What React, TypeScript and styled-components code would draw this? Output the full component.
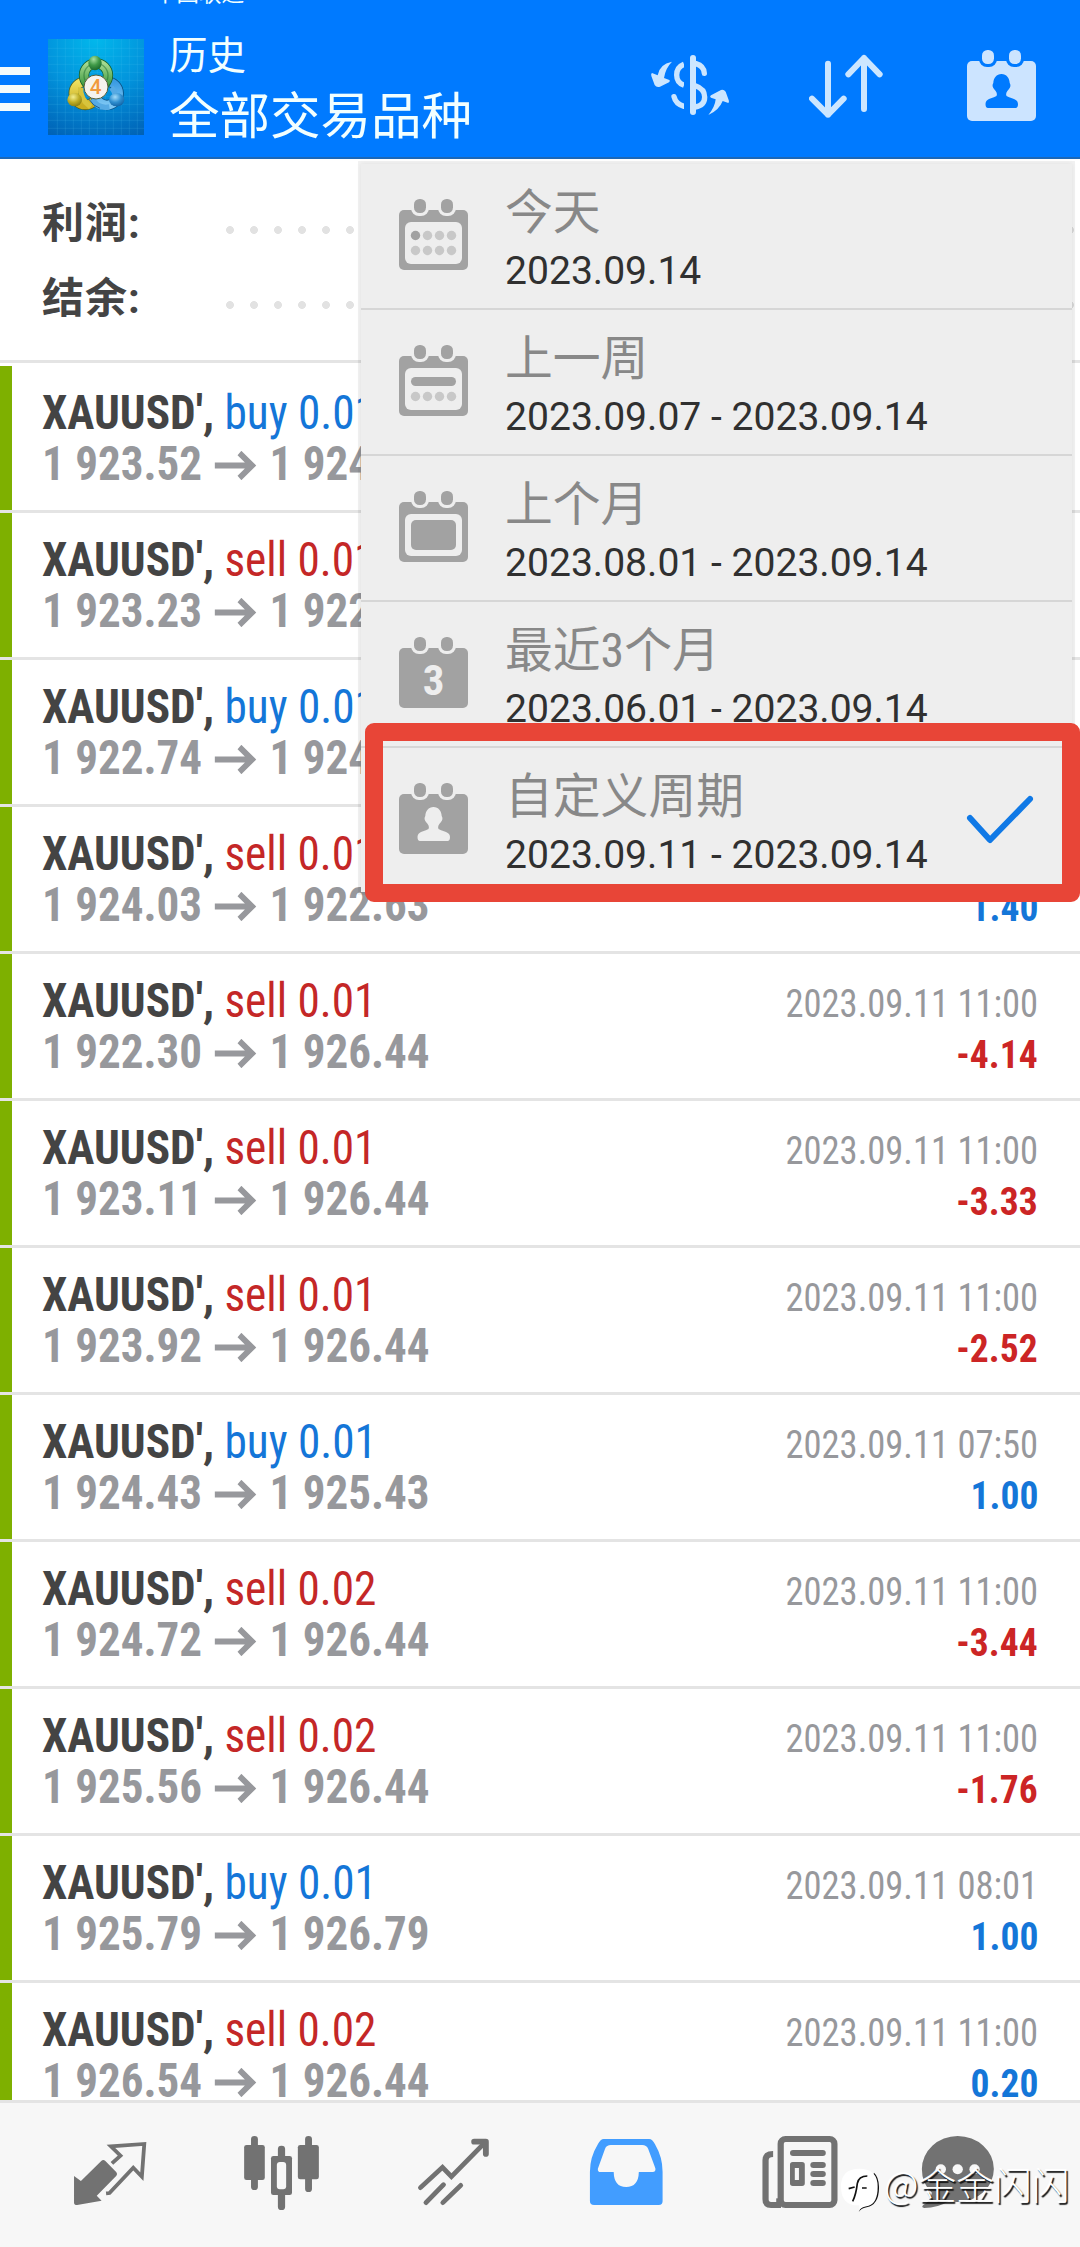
import React from 'react';
import styled, { createGlobalStyle } from 'styled-components';

const SANS = 'Roboto, "Noto Sans CJK SC", sans-serif';
const CONDENSED = '"Roboto Condensed", Roboto, "Noto Sans CJK SC", sans-serif';
const BLUE = '#007aff';

const Global = createGlobalStyle`
  body { margin: 0; background: #fff; font-family: ${SANS}; }
  div, span, section, header, nav { box-sizing: border-box; }
  svg { display: block; flex: none; }
`;

const Screen = styled.div`
  position: relative;
  display: flex;
  flex-direction: column;
  width: 1080px;
  height: 2247px;
  overflow: hidden;
  background: #fff;
`;

/* ---------- header ---------- */
const Header = styled.header`
  position: relative;
  display: flex;
  flex: none;
  height: 159px;
  padding-right: 44px;
  overflow: hidden;
  background: ${BLUE};
  border-bottom: 2px solid #1c68b8;
  color: #f2ffff;
`;
const Carrier = styled.div`
  position: absolute;
  left: 154px;
  top: -19px;
  font-size: 22.5px;
  line-height: 24px;
  white-space: nowrap;
`;
const Burger = styled.div`
  display: flex;
  flex-direction: column;
  gap: 10px;
  width: 30px;
  margin-right: 18px;
  padding-top: 67px;
`;
const BurgerLine = styled.span`
  height: 8px;
  background: #f4fbfb;
`;
const LogoBox = styled.div`
  padding-top: 39px;
`;
const Titles = styled.div`
  display: flex;
  flex-direction: column;
  gap: 8px;
  margin: 0 auto 0 25px;
  padding-top: 33px;
`;
const Caption = styled.div`
  font-size: 38.5px;
  line-height: 46px;
`;
const Title = styled.div`
  font-size: 50.5px;
  line-height: 60px;
`;
const Actions = styled.div`
  display: flex;
`;
const Action = styled.div<{ $gap: number }>`
  margin-left: ${p => p.$gap}px;
`;
const ActionCalendar = styled(Action)`
  padding-top: 50px;
`;

/* ---------- summary ---------- */
const Summary = styled.section`
  flex: none;
  height: 204px;
  margin-bottom: 3px;
  padding: 27px 0 0 42px;
  border-bottom: 3px solid #e4e4e4;
`;
const SummaryRow = styled.div`
  display: flex;
  height: 75px;
`;
const SummaryLabel = styled.div`
  width: 176px;
  color: #444;
  font-size: 42px;
  font-weight: 700;
  letter-spacing: 1px;
  line-height: 75px;
`;
const Dots = styled.div`
  flex: 1;
  background: radial-gradient(circle at 12px 44px, #e2e2e2 3.6px, transparent 4.2px) 0 0 / 24px 75px repeat-x;
`;

/* ---------- deals ---------- */
const Deals = styled.section`
  flex: 1;
  min-height: 0;
  overflow: hidden;
  font-family: ${CONDENSED};
`;
const Deal = styled.div`
  display: flex;
  height: 147px;
  border-bottom: 3px solid #e4e4e4;
`;
const Stripe = styled.div`
  width: 12px;
  background: #7eb000;
`;
const DealBody = styled.div`
  flex: 1;
  padding: 21px 42px 0 30px;
`;
const Line = styled.div`
  display: flex;
  align-items: baseline;
  justify-content: space-between;
  height: 51px;
  line-height: 51px;
  white-space: nowrap;
`;
const Side = styled.span<{ $buy: boolean }>`
  color: ${p => (p.$buy ? '#1476d8' : '#c42727')};
  font-weight: 400;
`;
const Symbol = styled.span`
  display: inline-block;
  transform: scaleX(0.943);
  transform-origin: left;
  color: #444;
  font-size: 48px;
  font-weight: 700;
`;
const Prices = styled.span`
  display: inline-flex;
  align-items: baseline;
  transform: scaleX(0.938);
  transform-origin: left;
  color: #97989c;
  font-size: 48px;
  font-weight: 700;
`;
const When = styled.span`
  transform: scaleX(0.925);
  transform-origin: right;
  color: #97989c;
  font-size: 39.5px;
`;
const Profit = styled.span<{ $up: boolean }>`
  transform: scaleX(0.95);
  transform-origin: right;
  color: ${p => (p.$up ? '#1476d8' : '#cc2525')};
  font-size: 39.5px;
  font-weight: 700;
`;
const ArrowSvg = styled.svg`
  margin: 0 14px 0 13px;
`;

/* ---------- period menu ---------- */
const Menu = styled.div`
  position: absolute;
  left: 361px;
  top: 164px;
  width: 711px;
  background: #eee;
  box-shadow: 0 0 0 3px rgba(0, 0, 0, 0.05), 0 0 5px rgba(0, 0, 0, 0.08);
`;
const MenuItem = styled.div`
  display: flex;
  height: 146px;
  padding: 0 38px;
  border-bottom: 2px solid #d6d6d6;
  &:last-child { height: 144px; border-bottom: 0; }
`;
const MenuIcon = styled.div`
  width: 106px;
  padding-top: 35px;
`;
const MenuText = styled.div`
  flex: 1;
  padding-top: 21px;
  white-space: nowrap;
`;
const MenuLabel = styled.div`
  margin-bottom: 6px;
  color: #888;
  font-family: ${CONDENSED};
  font-size: 47.8px;
  line-height: 56px;
`;
const MenuDates = styled.div`
  color: #303030;
  font-size: 39.1px;
  line-height: 48px;
`;
const Check = styled.svg`
  margin-top: 47px;
`;
const Highlight = styled.div`
  position: absolute;
  left: 365px;
  top: 723px;
  width: 715px;
  height: 179px;
  border: 18px solid #e84537;
  border-radius: 9px;
`;

/* ---------- tab bar ---------- */
const TabBar = styled.nav`
  display: flex;
  align-items: center;
  flex: none;
  height: 147px;
  padding-left: 24px;
  border-top: 3px solid #e4e4e4;
  background: #f7f7f7;
`;
const TabSvg = styled.svg`
  overflow: visible;
`;
const Watermark = styled.div`
  position: absolute;
  left: 841px;
  top: 2164px;
  display: flex;
  gap: 5px;
  color: #fff;
  font-family: "Noto Sans CJK SC", sans-serif;
  font-size: 37.8px;
  font-weight: 300;
  line-height: 38px;
  white-space: nowrap;
  text-shadow: 1.5px 1.5px 1px #111;
  svg { margin-top: 4px; }
`;

type Kind = 'day' | 'week' | 'month' | 'quarter' | 'custom';

function Calendar({ kind, color, paper }: { kind: Kind; color: string; paper: string }) {
  const xs = [16.5, 28.5, 40.5, 52.5];
  const framed = kind === 'day' || kind === 'week' || kind === 'month';
  return (
    <svg width="69" height="71" viewBox="0 0 69 71">
      <rect x="0" y="11" width="69" height="60" rx="5" fill={color} />
      {[12, 39].map(x => <rect key={x} x={x} y="-3" width="18" height="20" rx="8" fill={paper} />)}
      {[15, 42].map(x => <rect key={x} x={x} y="0" width="12" height="14" rx="5.5" fill={color} />)}
      {framed && <rect x="6" y="23" width="57" height="42" rx="6" fill={paper} />}
      {kind === 'day' && xs.map((x, i) => <circle key={x} cx={x} cy="36.5" r="4.7" fill={i ? '#c8c8c8' : color} />)}
      {kind === 'week' && <rect x="12" y="32" width="45" height="9" rx="4.5" fill={color} />}
      {(kind === 'day' || kind === 'week') && xs.map(x => <circle key={x} cx={x} cy="51.5" r="4.7" fill="#c8c8c8" />)}
      {kind === 'month' && <rect x="12" y="29" width="45" height="30" rx="5" fill={color} />}
      {kind === 'quarter' && (
        <text x="34.5" y="57.5" textAnchor="middle" fontFamily="Roboto Condensed" fontWeight="700" fontSize="43" fill={paper}>3</text>
      )}
      {kind === 'custom' && (
        <path
          fill={paper}
          d="M34.5 24C39.5 24 42.5 28 42.7 33Q44.5 36 42 39Q38 43 39.5 46Q41 47 47 49Q51 50.500 51 54Q51 58 48.500 58H21Q18.500 58 18.500 54Q18.500 50.500 22 49Q28 47 29.500 46Q31 43 27 39Q24.500 36 26.300 33C26.500 28 29.500 24 34.500 24Z"
        />
      )}
    </svg>
  );
}

function Logo() {
  const lines = [40, 64, 88, 112, 136, 160, 184, 208, 232, 256, 280];
  return (
    <svg width="96" height="96" viewBox="12 12 288 288">
      <defs>
        <radialGradient id="sky" cx="0.5" cy="0" r="1.1">
          <stop offset="0" stopColor="#02b8ec" />
          <stop offset="0.5" stopColor="#0293dc" />
          <stop offset="1" stopColor="#0062b6" />
        </radialGradient>
        <linearGradient id="green" x1="0" y1="0" x2="0" y2="1"><stop offset="0" stopColor="#a5da90" /><stop offset="1" stopColor="#35933a" /></linearGradient>
        <linearGradient id="yellow" x1="0" y1="0" x2="0" y2="1"><stop offset="0" stopColor="#eee060" /><stop offset="1" stopColor="#c9ad20" /></linearGradient>
        <linearGradient id="azure" x1="0" y1="0" x2="0" y2="1"><stop offset="0" stopColor="#3a9be2" /><stop offset="1" stopColor="#7cc6f3" /></linearGradient>
        <radialGradient id="greenBall" cx="0.4" cy="0.25" r="0.8"><stop offset="0" stopColor="#a6e0a0" /><stop offset="0.5" stopColor="#409a48" /><stop offset="1" stopColor="#16642a" /></radialGradient>
        <radialGradient id="yellowBall" cx="0.4" cy="0.3" r="0.8"><stop offset="0" stopColor="#f3ee90" /><stop offset="0.5" stopColor="#bfae26" /><stop offset="1" stopColor="#7e7410" /></radialGradient>
        <radialGradient id="blueBall" cx="0.4" cy="0.3" r="0.8"><stop offset="0" stopColor="#a4dcfa" /><stop offset="0.5" stopColor="#2f8fd0" /><stop offset="1" stopColor="#0d5a9c" /></radialGradient>
      </defs>
      <rect x="12" y="12" width="288" height="288" fill="url(#sky)" />
      <g stroke="#5fd0f5" strokeOpacity="0.22" strokeWidth="2">
        {lines.map(n => <path key={n} d={`M${n} 12V300M12 ${n}H300`} />)}
      </g>
      <g fill="none">
        <circle cx="124" cy="175" r="35" stroke="#4f6020" strokeWidth="31" />
        <circle cx="124" cy="175" r="35" stroke="url(#yellow)" strokeWidth="26" />
        <circle cx="189" cy="175" r="35" stroke="#0a4f80" strokeWidth="31" />
        <circle cx="189" cy="175" r="35" stroke="url(#azure)" strokeWidth="26" />
        <circle cx="156" cy="121" r="36" stroke="#14602c" strokeWidth="31" />
        <circle cx="156" cy="121" r="36" stroke="url(#green)" strokeWidth="26" />
        <circle cx="156" cy="121" r="36" stroke="#1c6b30" strokeOpacity="0.5" strokeWidth="4" />
        <path d="M110 158Q106 190 140 216" stroke="#d8c43c" strokeWidth="16" />
        <path d="M146 192Q160 222 196 216M202 158Q222 178 210 206" stroke="#56aae4" strokeWidth="16" />
        <path d="M134 192Q148 214 168 220" stroke="#1b5f93" strokeWidth="3" />
      </g>
      <ellipse cx="153" cy="84" rx="20" ry="22" fill="url(#greenBall)" />
      <ellipse cx="92" cy="194" rx="22" ry="20" fill="url(#yellowBall)" />
      <ellipse cx="218" cy="194" rx="23" ry="20" fill="url(#blueBall)" />
      <circle cx="156" cy="156" r="36" fill="#f5f3ee" stroke="#55603c" strokeWidth="3" />
      <text x="155" y="178" textAnchor="middle" fontFamily="Roboto" fontWeight="500" fontSize="62" fill="#f09a3e">4</text>
    </svg>
  );
}

function CurrencyIcon() {
  return (
    <svg width="79" height="159" viewBox="150 0 237 477">
      <g fill="none" stroke="#cce6ff" strokeWidth="16">
        <path d="M252 193Q230 202 230 225T252 256" />
        <path d="M288 191Q312 198 313 220M222 290Q227 312 252 319" strokeLinecap="round" />
        <path d="M286 257Q314 266 314 291T286 321" />
      </g>
      <path fill={BLUE} d="M252 180h18v155h-18z" />
      <rect x="270" y="165" width="18" height="180" rx="9" fill="#cce6ff" />
      <g fill="#cce6ff">
        <path d="M216 185Q178 192 173 226L156 219Q152 221 154 228L164 255Q170 264 180 260L207 247Q212 243 208 240L192 234Q196 205 216 185Z" />
        <path d="M325 345Q357 331 368 303L385 309Q388 306 386 300L377 275Q371 267 363 270L333 286Q328 290 333 293L347 298Q345 321 325 345Z" />
      </g>
    </svg>
  );
}

function SortIcon() {
  return (
    <svg width="74" height="159" viewBox="627 0 222 477" fill="none" stroke="#cce6ff" strokeWidth="18" strokeLinecap="round" strokeLinejoin="round">
      <path d="M684 191V344M636 296L684 344L731 296M792 327V174M745 223L792 174L839 223" />
    </svg>
  );
}

function Arrow() {
  return (
    <ArrowSvg width="45" height="29" viewBox="0 0 45 29" fill="none" stroke="#97989c" strokeWidth="6">
      <path d="M0 14.500H40M26.500 2L40 14.500L26.500 27" />
    </ArrowSvg>
  );
}

function Tab({ x, children }: { x: number; children: React.ReactNode }) {
  return (
    <TabSvg width="172" height="80" viewBox={`${x} 165 499.5 240`} preserveAspectRatio="none" fill="#727272">
      {children}
    </TabSvg>
  );
}

type DealData = { side: 'buy' | 'sell'; lot: string; open: string; close: string; when: string; profit: string };
const deals: DealData[] = [
  { side: 'buy', lot: '0.01', open: '1 923.52', close: '1 924.52', when: '2023.09.11 11:00', profit: '1.00' },
  { side: 'sell', lot: '0.01', open: '1 923.23', close: '1 922.23', when: '2023.09.11 11:00', profit: '1.00' },
  { side: 'buy', lot: '0.01', open: '1 922.74', close: '1 924.74', when: '2023.09.11 11:00', profit: '2.00' },
  { side: 'sell', lot: '0.01', open: '1 924.03', close: '1 922.63', when: '2023.09.11 11:00', profit: '1.40' },
  { side: 'sell', lot: '0.01', open: '1 922.30', close: '1 926.44', when: '2023.09.11 11:00', profit: '-4.14' },
  { side: 'sell', lot: '0.01', open: '1 923.11', close: '1 926.44', when: '2023.09.11 11:00', profit: '-3.33' },
  { side: 'sell', lot: '0.01', open: '1 923.92', close: '1 926.44', when: '2023.09.11 11:00', profit: '-2.52' },
  { side: 'buy', lot: '0.01', open: '1 924.43', close: '1 925.43', when: '2023.09.11 07:50', profit: '1.00' },
  { side: 'sell', lot: '0.02', open: '1 924.72', close: '1 926.44', when: '2023.09.11 11:00', profit: '-3.44' },
  { side: 'sell', lot: '0.02', open: '1 925.56', close: '1 926.44', when: '2023.09.11 11:00', profit: '-1.76' },
  { side: 'buy', lot: '0.01', open: '1 925.79', close: '1 926.79', when: '2023.09.11 08:01', profit: '1.00' },
  { side: 'sell', lot: '0.02', open: '1 926.54', close: '1 926.44', when: '2023.09.11 11:00', profit: '0.20' },
];
/* Deals up to this index lie behind the open menu. */
const COVERED = 3;

const periods: { kind: Kind; label: string; dates: string }[] = [
  { kind: 'day', label: '今天', dates: '2023.09.14' },
  { kind: 'week', label: '上一周', dates: '2023.09.07 - 2023.09.14' },
  { kind: 'month', label: '上个月', dates: '2023.08.01 - 2023.09.14' },
  { kind: 'quarter', label: '最近3个月', dates: '2023.06.01 - 2023.09.14' },
  { kind: 'custom', label: '自定义周期', dates: '2023.09.11 - 2023.09.14' },
];

export default function App() {
  return (
    <Screen>
      <Global />
      <Header>
        <Carrier>中国联通</Carrier>
        <Burger><BurgerLine /><BurgerLine /><BurgerLine /></Burger>
        <LogoBox><Logo /></LogoBox>
        <Titles>
          <Caption>历史</Caption>
          <Title>全部交易品种</Title>
        </Titles>
        <Actions>
          <Action $gap={0}><CurrencyIcon /></Action>
          <Action $gap={80}><SortIcon /></Action>
          <ActionCalendar $gap={84}><Calendar kind="custom" color="#cce4ff" paper={BLUE} /></ActionCalendar>
        </Actions>
      </Header>

      <Summary>
        <SummaryRow><SummaryLabel>利润:</SummaryLabel><Dots /></SummaryRow>
        <SummaryRow><SummaryLabel>结余:</SummaryLabel><Dots /></SummaryRow>
      </Summary>

      <Deals>
        {deals.map((d, i) => (
          <Deal key={i}>
            <Stripe />
            <DealBody>
              <Line>
                <Symbol>XAUUSD', <Side $buy={d.side === 'buy'}>{d.side} {d.lot}</Side></Symbol>
                {i > COVERED && <When>{d.when}</When>}
              </Line>
              <Line>
                <Prices>{d.open}<Arrow />{d.close}</Prices>
                {i >= COVERED && <Profit $up={!d.profit.startsWith('-')}>{d.profit}</Profit>}
              </Line>
            </DealBody>
          </Deal>
        ))}
      </Deals>

      <TabBar>
        <Tab x={69.7}>
          <path d="M215 288L235 303L294 243Q300 237 306 243L338 277Q342 282 338 287L281 347L295 362L224 375Q215 375 215 368Z" />
          <path d="M325 250L350 227L322 199L419 192L412 290L387 263L318 339L308 340" fill="none" stroke="#727272" strokeWidth="11" />
        </Tab>
        <Tab x={569.2}>
          <rect x="729" y="168" width="20" height="162" rx="10" />
          <rect x="709" y="195" width="60" height="105" rx="7" />
          <rect x="807" y="197" width="21" height="193" rx="10" />
          <rect x="787" y="228" width="61" height="117" rx="7" />
          <rect x="804" y="246" width="27" height="82" rx="9" fill="#f7f7f7" />
          <rect x="886" y="168" width="20" height="168" rx="10" />
          <rect x="865" y="195" width="61" height="103" rx="7" />
        </Tab>
        <Tab x={1068.7}>
          <g fill="none" stroke="#727272" strokeWidth="14" strokeLinecap="round">
            <path d="M1221 323L1285 262L1311 290L1408 188" />
            <path d="M1377 185H1411V222" strokeWidth="17" strokeLinejoin="round" />
            <path d="M1237 368L1288 314M1286 368L1338 316" />
          </g>
        </Tab>
        <Tab x={0}>
          <path
            fill="#429dff"
            fillRule="evenodd"
            d="M185 177H317Q326 177 334 193Q356 232 356 275V364Q356 375 345 375H157Q145 375 145 364V275Q145 232 168 193Q176 177 185 177ZM206 195Q193 195 189 206L168 266Q167 276 176 276H214Q215 321 250 321Q286 321 287 276H327Q337 276 335 265L314 206Q309 195 297 195Z"
          />
        </Tab>
        <Tab x={499.5}>
          <path d="M677 222Q655 222 655 241V358Q655 375 671 375H700" fill="none" stroke="#727272" strokeWidth="18" />
          <path d="M686 355h14v14h-14z" />
          <rect x="699" y="177" width="156" height="198" rx="14" fill="none" stroke="#727272" strokeWidth="18" />
          <rect x="726" y="210" width="104" height="18" rx="9" />
          <path fillRule="evenodd" d="M734 246H761Q769 246 769 254V310Q769 318 761 318H734Q726 318 726 310V254Q726 246 734 246ZM740 264V300H752V264Z" />
          {[246, 273, 300].map(y => <rect key={y} x="785" y={y} width="45" height="18" rx="9" />)}
        </Tab>
        <Tab x={999}>
          <path d="M1213 168A105 99 0 0 1 1213 366Q1198 366 1187 364Q1155 384 1116 384Q1106 382 1113 375Q1134 364 1138 338Q1109 312 1109 267A105 99 0 0 1 1213 168Z" />
          {[1164, 1213, 1262].map(x => <circle key={x} cx={x} cy="268" r="15" fill="#f7f7f7" />)}
        </Tab>
      </TabBar>

      <Menu>
        {periods.map(p => (
          <MenuItem key={p.kind}>
            <MenuIcon><Calendar kind={p.kind} color="#a2a2a2" paper="#eee" /></MenuIcon>
            <MenuText>
              <MenuLabel>{p.label}</MenuLabel>
              <MenuDates>{p.dates}</MenuDates>
            </MenuText>
            {p.kind === 'custom' && (
              <Check width="68" height="50" viewBox="0 0 68 50" fill="none" stroke="#1079e6" strokeWidth="6" strokeLinecap="round" strokeLinejoin="round">
                <path d="M4 23L24 45L64 4" />
              </Check>
            )}
          </MenuItem>
        ))}
      </Menu>
      <Highlight />

      <Watermark>
        <svg width="38" height="44" viewBox="33 36 114 132">
          <path d="M86 168Q92 158 110 154Q148 146 147 92Q146 62 132 50L100 140Z" fill="#111" />
          <path d="M88 38Q143 38 143 92Q143 140 116 149Q96 152 88 161V148Q33 150 33 92Q33 38 88 38Z" fill="#fff" />
          <path d="M68 136Q78 116 82 82Q86 60 112 60" fill="none" stroke="#111" strokeWidth="5" />
          <path d="M56 98L74 93M96 96H110" fill="none" stroke="#111" strokeWidth="5" />
        </svg>
        @金金闪闪
      </Watermark>
    </Screen>
  );
}
